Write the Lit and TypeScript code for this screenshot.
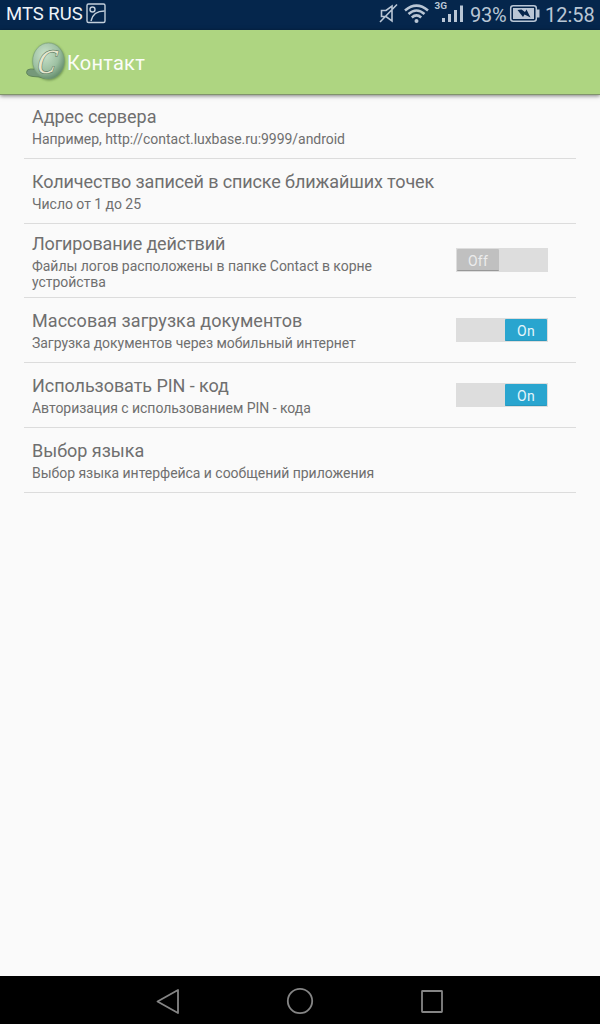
import { LitElement, html, css } from "lit";
import { customElement, property } from "lit/decorators.js";

@customElement("toggle-switch")
class ToggleSwitch extends LitElement {
  @property({ type: Boolean }) on = false;
  static styles = css`
    :host { display: block; flex: none; }
    .track { box-sizing: border-box; width: 92px; height: 24px; padding: 1px; display: flex; background: #ddd; }
    .track.on { justify-content: flex-end; }
    .thumb { box-sizing: border-box; width: 42px; height: 22px; line-height: 24px; border-radius: 1px; text-align: center; font-size: 14px; letter-spacing: 0.2px; color: #ececec; background: #c0c0c0; border-bottom: 1px solid #989898; }
    .on .thumb { color: #e6f6fb; background: #29a5cf; border-bottom-color: #2797bd; }
  `;
  render() {
    return html`<div class="track ${this.on ? "on" : ""}"><div class="thumb">${this.on ? "On" : "Off"}</div></div>`;
  }
}

interface Pref { title: string; summary: string; tracking: number; on?: boolean; tall?: boolean; }
const prefs: Pref[] = [
  { title: "Адрес сервера", tracking: -0.04, summary: "Например, http://contact.luxbase.ru:9999/android" },
  { title: "Количество записей в списке ближайших точек", tracking: -0.11, summary: "Число от 1 до 25" },
  { title: "Логирование действий", tracking: -0.15, summary: "Файлы логов расположены в папке Contact в корне устройства", on: false, tall: true },
  { title: "Массовая загрузка документов", tracking: 0.06, summary: "Загрузка документов через мобильный интернет", on: true },
  { title: "Использовать PIN - код", tracking: -0.06, summary: "Авторизация с использованием PIN - кода", on: true },
  { title: "Выбор языка", tracking: -0.03, summary: "Выбор языка интерфейса и сообщений приложения" },
];

@customElement("app-root")
class AppRoot extends LitElement {
  static styles = css`
    :host { display: flex; flex-direction: column; height: 1024px; width: 600px; overflow: hidden; background: #fafafa; font-family: Roboto, sans-serif; color: #6f6f6f; }
    svg { display: block; flex: none; }
    .status { height: 30px; flex: none; box-sizing: border-box; padding: 0 6px; display: flex; align-items: center; justify-content: space-between; background: #05264c; color: #b9c6d5; }
    .carrier, .indicators { display: flex; align-items: center; height: 30px; }
    .carrier { color: #eef3f8; font-size: 18.5px; line-height: 28px; }
    .carrier span { width: 80px; white-space: nowrap; padding-bottom: 2px; }
    .indicators { font-size: 20px; line-height: 30px; }
    .pct { width: 36px; padding-left: 2px; letter-spacing: -0.3px; white-space: nowrap; }
    .clock { width: 49px; white-space: nowrap; }
    .bar { height: 65px; flex: none; box-sizing: border-box; border-bottom: 1px solid #80936b; background: #aed581; display: flex; align-items: center; padding-left: 24px; color: #fbfdf8; font-size: 20px; letter-spacing: 0.25px; box-shadow: 0 1px 4px rgba(0,0,0,.5); }
    .bar span { padding-top: 1px; }
    .list { flex: 1; padding: 0 24px; display: flex; flex-direction: column; }
    .row { box-sizing: border-box; height: 65px; padding: 0 28px 0 8px; border-bottom: 1px solid #dcdcdc; display: flex; align-items: center; justify-content: space-between; }
    .text { padding-top: 2px; }
    .row:first-child { height: 64px; }
    .row:first-child .text { padding-top: 0; }
    .row.tall { height: 74px; }
    .row.tall toggle-switch { padding-bottom: 2px; }
    .title { font-size: 18px; line-height: 24px; white-space: nowrap; }
    .summary { font-size: 14px; line-height: 16px; letter-spacing: -0.035px; padding: 2px 0; max-width: 400px; }
    .nav { height: 48px; flex: none; background: #000; display: flex; justify-content: center; }
    .logo { font-family: "Liberation Serif", serif; font-style: italic; }
  `;

  renderLogo() {
    return html`<svg width="43" height="46" viewBox="0 0 43 46">
      <defs>
        <radialGradient id="orb" cx=".38" cy=".32" r=".75"><stop offset="0" stop-color="#c9e2ca"/><stop offset=".6" stop-color="#9dc0a2"/><stop offset="1" stop-color="#5c8563"/></radialGradient>
        <filter id="soft"><feGaussianBlur stdDeviation=".8"/></filter>
      </defs>
      <ellipse cx="25" cy="22.800" rx="16.300" ry="18.600" fill="#628647" opacity=".8" filter="url(#soft)"/>
      <path d="M14 28.500Q10 31 6.500 30Q2.500 30 2.500 33.500Q3 37 9 37.500Q15 37.500 21 39.500Z" fill="#76997a" stroke="#557b50" stroke-width=".8"/>
      <ellipse cx="24.500" cy="22" rx="15.800" ry="18" fill="url(#orb)" stroke="#779c7a" stroke-width=".6"/>
      <text class="logo" transform="translate(12 33.500) skewX(-10)" font-size="34" textLength="18.500" lengthAdjust="spacingAndGlyphs" fill="#e6e6cd" stroke="#64806a" stroke-width="1.400" paint-order="stroke">C</text>
    </svg>`;
  }

  renderIndicators() {
    return html`<svg width="94" height="30" viewBox="374 0 94 30" fill="none" stroke="#b9c6d5">
      <path d="M381.500 10.500H386L392 6V21L386 16.500H381.500ZM397 4.500L380 22" stroke-width="1.600"/>
      <path d="M405 10.500Q416.500 .8 428 10.500M408.500 14Q416.500 7 424.500 14M411.800 17.500Q416.500 13.300 421.200 17.500" stroke-width="2.600"/>
      <circle cx="416.500" cy="21" r="2" fill="#b9c6d5" stroke="none"/>
      <text x="434.500" y="9" font-size="9.500" font-weight="700" fill="#b9c6d5" stroke="none" textLength="12.500" lengthAdjust="spacingAndGlyphs">3G</text>
      <path d="M443.500 18V22M449.500 14V22M455.500 10V22M461.500 5.500V22" stroke-width="3"/>
    </svg>`;
  }

  render() {
    return html`
      <div class="status">
        <div class="carrier"><span>MTS RUS</span>
          <svg width="20" height="30" viewBox="86 0 20 30" fill="none" stroke="#c3cfdb" stroke-width="1.400"><rect x="87" y="4" width="18" height="18.500" rx="1.500"/><circle cx="92.500" cy="9.500" r="2.500"/><path d="M91 21Q93 11 104.500 11"/></svg>
        </div>
        <div class="indicators">
          ${this.renderIndicators()}
          <span class="pct">93%</span>
          <svg width="39" height="30" viewBox="506 0 39 30"><rect x="510.700" y="5.700" width="25.600" height="15.600" rx="2.500" fill="none" stroke="#b9c6d5" stroke-width="1.500"/><rect x="513" y="8" width="21" height="11" fill="#b9c6d5"/><path d="M537 9.500H539.500V17.500H537Z" fill="#b9c6d5"/><path d="M517.500 10L521.500 9.500L525 12L526.500 9.500L530.500 17.500L524.500 14.500L523 17Z" fill="#05264c"/></svg>
          <span class="clock">12:58</span>
        </div>
      </div>
      <div class="bar">${this.renderLogo()}<span>Контакт</span></div>
      <div class="list">
        ${prefs.map(p => html`<div class="row ${p.tall ? "tall" : ""}">
          <div class="text"><div class="title" style="letter-spacing:${p.tracking}px">${p.title}</div><div class="summary">${p.summary}</div></div>
          ${p.on === undefined ? "" : html`<toggle-switch ?on=${p.on}></toggle-switch>`}
        </div>`)}
      </div>
      <div class="nav"><svg width="320" height="48" viewBox="140 976 320 48" fill="none" stroke="#858585" stroke-width="1.800" stroke-linejoin="round">
        <path d="M157.500 1001.500L178 990V1013Z"/><circle cx="300" cy="1001" r="12.200"/><rect x="422" y="991" width="20" height="21" rx=".5"/>
      </svg></div>`;
  }
}
